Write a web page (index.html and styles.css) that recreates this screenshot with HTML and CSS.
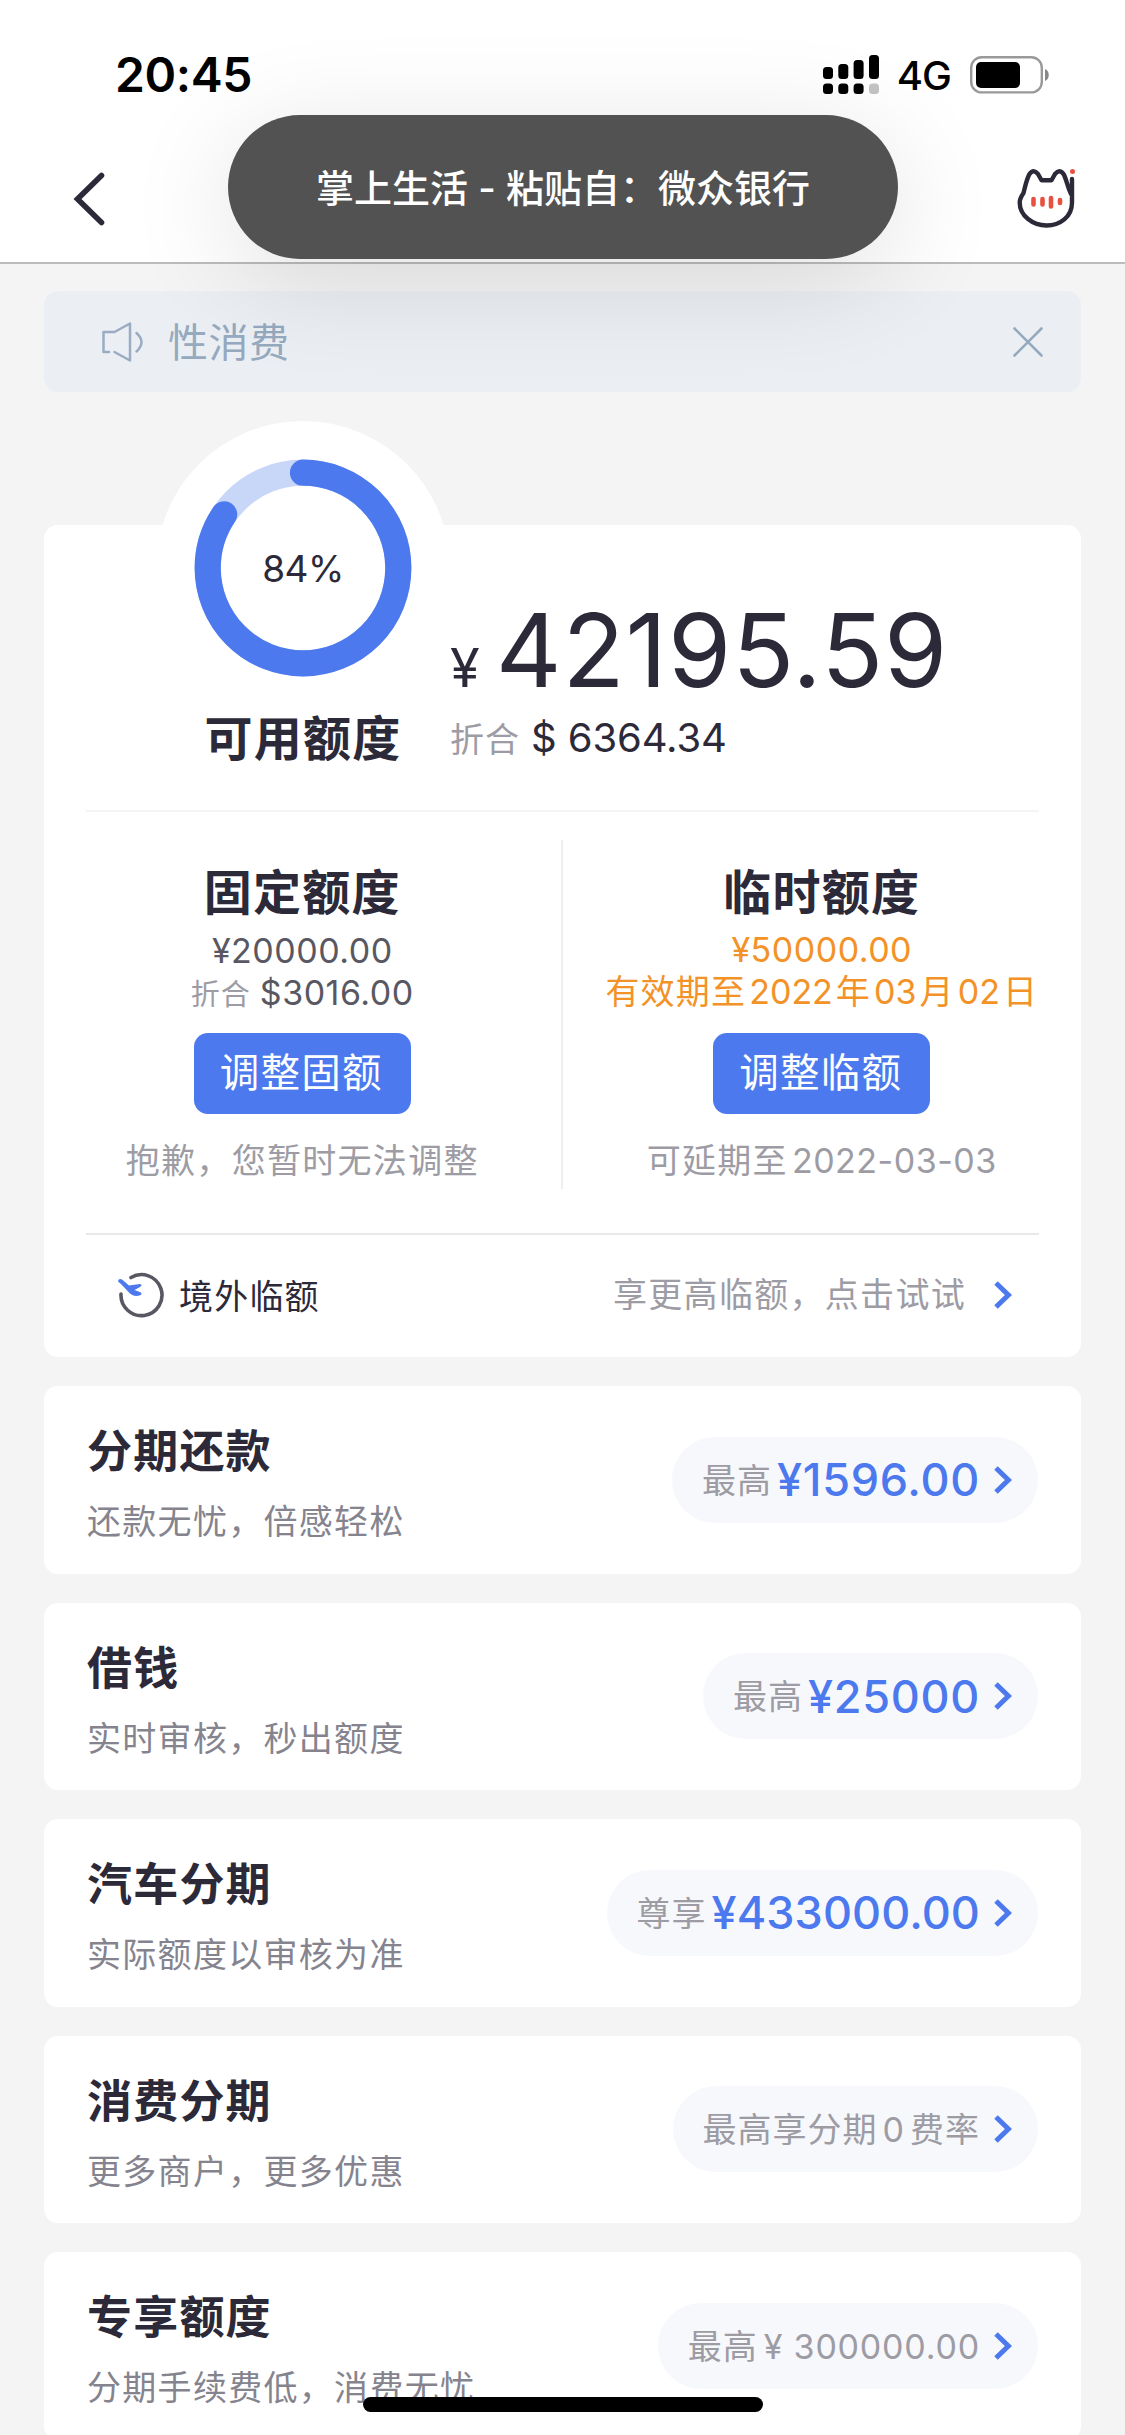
FILE: index.html
```html
<!DOCTYPE html>
<html lang="zh-CN">
<head>
<meta charset="utf-8">
<title>额度</title>
<link rel="stylesheet" href="styles.css">
</head>
<body>
<svg width="0" height="0" class="defs">
  <symbol id="chevron" viewBox="0 0 18 28"><path d="M2 2l12.4 12L2 26" fill="none" stroke="#4d79ee" stroke-width="5"/></symbol>
</svg>
<div class="screen">
  <header class="header">
    <div class="status-bar">
      <span class="time">20:45</span>
      <div class="status-icons">
        <svg class="signal" width="56" height="39" viewBox="0 0 56 39">
          <rect x="0" y="12" width="10" height="12" rx="3.5"/><rect x="15.3" y="9" width="10" height="15" rx="3.5"/><rect x="30.6" y="5" width="10" height="19" rx="3.5"/><rect x="46" y="0" width="10" height="24" rx="3.5"/>
          <rect x="0" y="28.500" width="10" height="10.500" rx="3.5"/><rect x="15.300" y="28.500" width="10" height="10.500" rx="3.5"/><rect x="30.600" y="28.500" width="10" height="10.500" rx="3.5"/><rect x="46" y="28.500" width="10" height="10.500" rx="3.5" fill="#c4c4c4"/>
        </svg>
        <span class="network">4G</span>
        <svg class="battery" width="80" height="38" viewBox="0 0 80 38">
          <rect x="1.200" y="1.200" width="70.600" height="35.200" rx="10.500" fill="none" stroke="#999" stroke-width="2.400"/>
          <rect x="6" y="6" width="44" height="26" rx="5"/>
          <path d="M75 13c5 1.500 5 10.500 0 12z" fill="#888"/>
        </svg>
      </div>
    </div>
    <nav class="nav">
      <svg width="34" height="56" viewBox="0 0 34 56"><path d="M29.500 4.500L5.500 28l24 23.500" fill="none" stroke="#2c2939" stroke-width="5.600" stroke-linecap="round"/></svg>
      <svg width="60" height="62" viewBox="0 0 60 62">
        <path d="M55 11V34.500C55 49 43 57.500 29.500 57.500S2.700 48 2.700 34.500C2.700 31 4.500 28 6.500 25C8.500 17 10 10 12.500 6Q16.500 0.500 21 6L24.500 12.300H34.500L38 6Q42.500 0.500 46.500 6C49.500 11 50 18 54 26" fill="none" stroke="#2c2939" stroke-width="4.400" stroke-linecap="round" stroke-linejoin="round"/>
        <g stroke="#e8513f" stroke-width="4.600" stroke-linecap="round"><path d="M16.500 31v5.500M25.500 31v5.500M34 30v8.500M43 32v3"/></g>
        <circle cx="55.500" cy="3.500" r="2.500" fill="#e8513f"/>
      </svg>
    </nav>
  </header>

  <main class="content">
    <div class="notice">
      <svg width="42" height="42" viewBox="0 0 42 42" fill="none" stroke="#9aacc2" stroke-width="2.500" stroke-linecap="round" stroke-linejoin="round"><path d="M7 31H1.500V11h11L28 2.500V39.500L12.500 31"/><path d="M34.500 12q10 9 0 18.500"/></svg>
      <span class="notice-text">性消费</span>
      <svg width="30" height="30" viewBox="0 0 30 30"><path d="M1.500 1.500l27 27M28.500 1.500l-27 27" stroke="#95a9bf" stroke-width="2.600" stroke-linecap="round"/></svg>
    </div>

    <section class="quota card">
      <div class="summary">
        <div class="available">
          <div class="gauge">
            <svg width="218" height="218" viewBox="-109 -109 218 218">
              <circle r="95.300" fill="none" stroke="#c8d6f8" stroke-width="26.200"/>
              <circle r="95.300" fill="none" stroke="#4d79ee" stroke-width="26.200" stroke-linecap="round" pathLength="100" stroke-dasharray="84.500 100" transform="rotate(-90)"/>
            </svg>
            <span class="percent">84%</span>
          </div>
          <h2 class="quota-title">可用额度</h2>
        </div>
        <div class="balance">
          <div class="balance-main"><span class="yen">¥</span><span class="balance-number">42195.59</span></div>
          <div class="balance-usd"><span class="muted">折合</span><span class="usd">$ 6364.34</span></div>
        </div>
      </div>
      <div class="split">
        <div class="column">
          <h2 class="quota-title">固定额度</h2>
          <p class="money">¥20000.00</p>
          <p class="money converted"><span class="muted">折合</span>$3016.00</p>
          <button class="adjust">调整固额</button>
          <p class="hint">抱歉，您暂时无法调整</p>
        </div>
        <div class="column column-temp">
          <h2 class="quota-title">临时额度</h2>
          <p class="money">¥50000.00</p>
          <p class="money expiry">有效期至<span class="num">2022</span>年<span class="num">03</span>月<span class="num">02</span>日</p>
          <button class="adjust">调整临额</button>
          <p class="hint">可延期至<span class="date">2022-03-03</span></p>
        </div>
      </div>
      <div class="overseas">
        <svg width="46" height="46" viewBox="0 0 46 46">
          <path d="M13 5.500A20.500 20.500 0 1 1 3 22" fill="none" stroke="#595862" stroke-width="3.600" stroke-linecap="round"/>
          <path d="M0 9.500Q.5 6 4 7.500L11 13.500L22 12Q25 13 22 15L16.500 18L23 20.500Q24.500 22.500 21.500 23.500Q15 25 11 20.500L3 12Z" fill="#4d79ee"/>
        </svg>
        <span class="overseas-name">境外临额</span>
        <span class="hint overseas-hint">享更高临额，点击试试</span>
        <svg class="chevron"><use href="#chevron"/></svg>
      </div>
    </section>

    <section class="card product">
      <div class="product-info"><h3>分期还款</h3><p>还款无忧，倍感轻松</p></div>
      <div class="pill"><span class="label">最高</span><b>¥1596.00</b><svg class="chevron"><use href="#chevron"/></svg></div>
    </section>
    <section class="card product">
      <div class="product-info"><h3>借钱</h3><p>实时审核，秒出额度</p></div>
      <div class="pill"><span class="label">最高</span><b>¥25000</b><svg class="chevron"><use href="#chevron"/></svg></div>
    </section>
    <section class="card product">
      <div class="product-info"><h3>汽车分期</h3><p>实际额度以审核为准</p></div>
      <div class="pill"><span class="label">尊享</span><b class="long">¥433000.00</b><svg class="chevron"><use href="#chevron"/></svg></div>
    </section>
    <section class="card product">
      <div class="product-info"><h3>消费分期</h3><p>更多商户，更多优惠</p></div>
      <div class="pill"><span class="label">最高享分期<span class="zero">0</span>费率</span><svg class="chevron"><use href="#chevron"/></svg></div>
    </section>
    <section class="card product">
      <div class="product-info"><h3>专享额度</h3><p>分期手续费低，消费无忧</p></div>
      <div class="pill"><span class="label">最高<span class="sum">¥ 300000.00</span></span><svg class="chevron"><use href="#chevron"/></svg></div>
    </section>
  </main>

  <div class="toast">掌上生活 - 粘贴自：微众银行</div>
  <div class="home-indicator"></div>
</div>
</body>
</html>
```
FILE: styles.css
```css
* { box-sizing: border-box; }
body {
  margin: 0;
  background: #f4f4f4;
  color: #2c2939;
  font-family: Inter, "Noto Sans CJK SC", sans-serif;
}
h2, h3, p { margin: 0; }
svg { display: block; flex: none; }
.defs { position: absolute; }
.screen {
  position: relative;
  width: 1125px;
  height: 2435px;
  overflow: hidden;
}

/* header */
.header {
  height: 264px;
  background: #fff;
  border-bottom: 2px solid #bcbcbc;
}
.status-bar {
  display: flex;
  align-items: center;
  justify-content: space-between;
  height: 149px;
  padding: 0 75px 0 115px;
  color: #000;
}
.time { font-size: 48px; font-weight: 600; letter-spacing: -.4px; }
.status-icons { display: flex; align-items: center; }
.network { margin: 2px 19px 0 18px; font-size: 40px; line-height: 40px; font-weight: 500; letter-spacing: -1px; }
.nav {
  display: flex;
  align-items: center;
  justify-content: space-between;
  height: 99px;
  padding: 0 48px 0 72px;
}

/* notice */
.content { padding: 27px 44px 0; }
.notice {
  display: flex;
  align-items: center;
  height: 101px;
  margin-bottom: 133px;
  padding: 0 38px 0 58px;
  border-radius: 14px;
  background: #ebeff4;
}
.notice-text {
  flex: 1;
  margin-left: 24px;
  padding-bottom: 3px;
  color: #95a9bf;
  font-size: 40px;
  letter-spacing: .5px;
}

/* quota card */
.card { border-radius: 14px; background: #fff; }
.quota { height: 832px; }
.summary {
  display: flex;
  align-items: flex-end;
  height: 287px;
  margin: 0 42px;
  padding: 0 0 49px 70px;
  border-bottom: 2px solid #f4f4f4;
}
.available { width: 294px; text-align: center; }
.gauge {
  display: grid;
  place-items: center;
  width: 294px;
  height: 294px;
  border-radius: 50%;
  background: #fff;
}
.gauge > * { grid-area: 1 / 1; }
.percent { font-size: 37px; letter-spacing: -.5px; }
.quota-title { height: 46px; font-size: 48px; line-height: 48px; font-weight: 600; letter-spacing: 1.200px; }
.balance { white-space: nowrap; }
.balance-main { display: flex; align-items: baseline; height: 130px; line-height: 130px; }
.yen { font-size: 54px; }
.balance-number { margin-left: 16px; font-size: 102px; letter-spacing: .9px; }
.balance-usd { height: 46px; font-size: 40px; line-height: 45px; }
.muted { color: #9d9ca4; font-size: 34px; line-height: 1; letter-spacing: 1px; }
.usd { margin-left: 11px; letter-spacing: -.1px; }

.split {
  display: grid;
  grid-template-columns: 1fr 1fr;
  height: 349px;
  margin: 28px 0 44px;
}
.column {
  display: flex;
  flex-direction: column;
  align-items: center;
  padding: 29px 2px 0 0;
  white-space: nowrap;
}
.column-temp { margin-left: -2px; padding-right: 0; border-left: 2px solid #eee; }
.money {
  height: 42px;
  margin-top: 14px;
  color: #595862;
  font-size: 34px;
  line-height: 43px;
  letter-spacing: .5px;
}
.converted { margin-top: 0; }
.converted .muted { margin-right: 9px; font-size: 29px; }
.column-temp .money { color: #f29227; line-height: 42px; }
.expiry { margin-top: 0; letter-spacing: 1.200px; }
.num { margin: 0 3px; letter-spacing: 0; }
.adjust {
  width: 217px;
  height: 81px;
  margin: 20px 0 22px;
  padding: 0 2px 0 0;
  border: 0;
  border-radius: 14px;
  background: #4d79ee;
  color: #fff;
  font: 39.500px/79px Inter, "Noto Sans CJK SC", sans-serif;
  letter-spacing: 1.200px;
}
.hint { color: #9d9ca4; font-size: 34px; line-height: 50px; letter-spacing: 1.300px; }
.date { margin-left: 4px; letter-spacing: .5px; }

.overseas {
  display: flex;
  align-items: center;
  height: 124px;
  margin: 0 42px;
  padding: 0 27px 2px 32px;
  border-top: 2px solid #e9e9ea;
}
.overseas-name { flex: 1; margin-left: 15px; padding-bottom: 2px; font-size: 34px; letter-spacing: 1.200px; }
.chevron { width: 18px; height: 28px; }
.overseas-hint { margin-right: 28px; }

/* product cards */
.product {
  display: flex;
  align-items: center;
  justify-content: space-between;
  height: 187.500px;
  margin-top: 29px;
  padding: 0 43px;
}
.product-info { padding-top: 12px; }
.product-info h3 { font-size: 45px; line-height: 56px; font-weight: 600; letter-spacing: 1.200px; }
.product-info p { margin-top: 17px; color: #85848e; font-size: 34px; line-height: 50px; letter-spacing: 1.300px; }
.pill {
  display: flex;
  align-items: center;
  height: 86px;
  padding: 0 26px 0 30px;
  border-radius: 43px;
  background: #f7f8fb;
  color: #9d9ca4;
  font-size: 34px;
  letter-spacing: 1px;
  white-space: nowrap;
}
.label { padding-bottom: 3px; }
.pill b { margin-left: 5px; color: #4d79ee; font-size: 45px; font-weight: 500; letter-spacing: .7px; }
.pill b.long { letter-spacing: .1px; }
.pill .chevron { margin-left: 14px; }
.zero { margin: 0 5px; }
.sum { margin-left: 6px; letter-spacing: .8px; }

/* overlays */
.toast {
  position: absolute;
  top: 115px;
  left: 228px;
  width: 670px;
  height: 144px;
  border-radius: 72px;
  background: #525252;
  box-shadow: 0 20px 110px rgba(0, 0, 0, .12);
  color: #fff;
  font-size: 38px;
  font-weight: 500;
  line-height: 146px;
  text-align: center;
}
.home-indicator {
  position: absolute;
  left: 363px;
  top: 2397px;
  width: 400px;
  height: 15px;
  border-radius: 8px;
  background: #000;
}
```
